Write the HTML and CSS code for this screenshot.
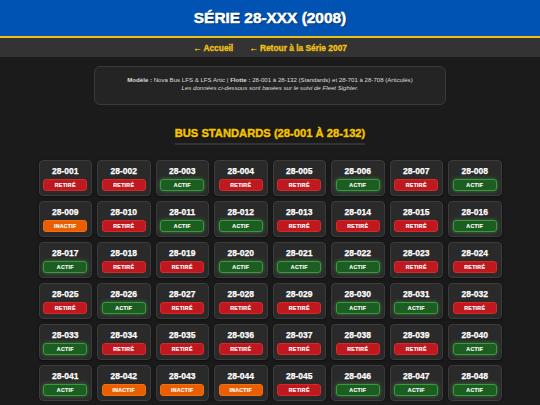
FILE: index.html
```html
<!DOCTYPE html>
<html lang="fr">
<head>
    <meta charset="UTF-8">
    <meta name="viewport" content="width=device-width, initial-scale=1.0">
    <title>Série 28-XXX (2008)</title>
    <link rel="stylesheet" href="styles.css">
</head>
<body>
    <header>
        <h1>SÉRIE 28-XXX (2008)</h1>
    </header>
    <nav>
        <a href="#">← Accueil</a>
        <a href="#">← Retour à la Série 2007</a>
    </nav>
    <main>
        <div class="info-box">
            <p><strong>Modèle :</strong> Nova Bus LFS &amp; LFS Artic | <strong>Flotte :</strong> 28-001 à 28-132 (Standards) et 28-701 à 28-708 (Articulés)</p>
            <p><em>Les données ci-dessous sont basées sur le suivi de Fleet Sighter.</em></p>
        </div>
        <div class="section-title">
            <h2>BUS STANDARDS (28-001 À 28-132)</h2>
        </div>
        <div class="bus-grid" id="bus-grid"></div>
    </main>

    <script>
        // R = retiré, A = actif, I = inactif
        const statuts = "RRARRARA" + "IRAARRRA" + "ARRAAARR" + "RARRRAAR" + "ARRRRRRA" + "AIIIRAAA";
        const labels = { R: "RETIRÉ", A: "ACTIF", I: "INACTIF" };
        const classes = { R: "retire", A: "actif", I: "inactif" };
        const grid = document.getElementById("bus-grid");

        for (let i = 0; i < statuts.length; i++) {
            const s = statuts[i];
            const num = "28-" + String(i + 1).padStart(3, "0");
            const card = document.createElement("div");
            card.className = "bus-card";
            card.innerHTML = `<div class="bus-num">${num}</div><div class="badge ${classes[s]}">${labels[s]}</div>`;
            grid.appendChild(card);
        }
    </script>
</body>
</html>
```

FILE: styles.css
```css
body {
    font-family: "Liberation Sans", Arial, sans-serif;
    margin: 0;
    padding: 0;
    background: #1b1b1b;
    color: #ddd;
}
header {
    background: #0053b3;
    height: 36px;
    border-bottom: 2px solid #e9c31c;
    display: flex;
    align-items: center;
    justify-content: center;
}
header h1 {
    margin: 0;
    font-size: 15.4px;
    font-weight: bold;
    color: #fff;
    -webkit-text-stroke: 0.5px #fff;
    text-shadow: 1px 1px 1px rgba(0, 0, 0, 0.5);
}
nav {
    background: #333;
    height: 19px;
    display: flex;
    align-items: center;
    justify-content: center;
    gap: 16px;
}
nav a {
    color: #f2c312;
    font-size: 8.4px;
    font-weight: bold;
    -webkit-text-stroke: 0.3px #f2c312;
    text-decoration: none;
}
main {
    padding-top: 9px;
}
.info-box {
    width: 350px;
    margin: 0 auto;
    padding: 9px 0 11px;
    background: #242424;
    border: 1px solid #3a3a3a;
    border-radius: 6px;
    text-align: center;
    font-size: 6.1px;
    line-height: 8.3px;
    color: #ddd;
}
.info-box p {
    margin: 0;
}
.section-title {
    text-align: center;
    margin-top: 18px;
}
.section-title h2 {
    display: inline-block;
    margin: 0;
    padding-bottom: 3px;
    font-size: 11.2px;
    line-height: 13px;
    color: #f5c400;
    -webkit-text-stroke: 0.4px #f5c400;
    border-bottom: 2px solid #333;
    text-shadow: 1px 1px 1px rgba(0, 0, 0, 0.6);
}
.bus-grid {
    display: grid;
    grid-template-columns: repeat(8, 53.5px);
    gap: 5px;
    width: 463px;
    margin: 15px auto 0;
}
.bus-card {
    height: 36px;
    box-sizing: border-box;
    background: #2a2a2a;
    border: 1px solid #3c3c3c;
    border-radius: 4px;
    padding: 4px 4px 0;
    box-shadow: 0 1px 3px rgba(0, 0, 0, 0.5);
    display: flex;
    flex-direction: column;
    align-items: center;
}
.bus-num {
    font-size: 8.5px;
    font-weight: bold;
    line-height: 12px;
    color: #fff;
    -webkit-text-stroke: 0.25px #fff;
}
.badge {
    width: 44px;
    height: 12px;
    margin-top: 2px;
    box-sizing: border-box;
    border-radius: 3px;
    font-size: 5.2px;
    font-weight: bold;
    letter-spacing: 0.3px;
    color: #fff;
    -webkit-text-stroke: 0.15px #fff;
    display: flex;
    align-items: center;
    justify-content: center;
}
.retire {
    background: #c0181f;
    border: 1px solid #d32a2a;
}
.actif {
    background: #1c5e21;
    border: 1px solid #3a9a3e;
    box-shadow: 0 0 4px rgba(76, 175, 80, 0.55);
}
.inactif {
    background: #e85e00;
    border: 1px solid #f07010;
}
```
